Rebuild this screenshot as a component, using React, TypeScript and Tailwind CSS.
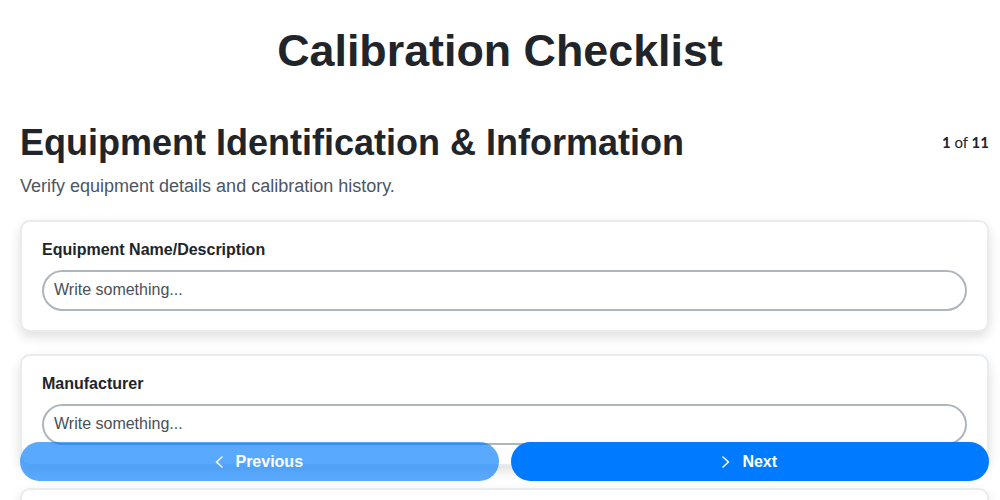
import React from "react";

const fields = ["Equipment Name/Description", "Manufacturer", "Model Number"];

const Chevron: React.FC<{ dir: "left" | "right" }> = ({ dir }) => (
  <svg width="8" height="12" viewBox="0 0 8 12" fill="none" stroke="currentColor" strokeWidth="1.6" strokeLinecap="round" strokeLinejoin="round">
    <path d={dir === "left" ? "M7 1 L1.5 6 L7 11" : "M1 1 L6.5 6 L1 11"} />
  </svg>
);

const Field: React.FC<{ label: string }> = ({ label }) => (
  <div className="mb-[22px] rounded-[10px] border-2 border-[#e9ecef] bg-white px-5 pt-[16px] pb-[19px] shadow-[0_5px_12px_rgba(0,0,0,0.13)]">
    <label className="mb-2 block text-base leading-6 font-bold text-[#212529]">
      {label}
    </label>
    <input
      type="text"
      placeholder="Write something..."
      className="block h-[41px] w-full rounded-full border-2 border-[#adb5bd] bg-white px-[10px] text-base text-[#212529] placeholder:text-[#495057] outline-none"
    />
  </div>
);

export default function App() {
  return (
    <div className="min-h-screen bg-white font-['Liberation_Sans',Arial,sans-serif] text-[#212529]">
      <h1 className="pt-6 text-center text-[44.8px] leading-[1.2] font-bold">
        Calibration Checklist
      </h1>

      <div className="pl-5 pr-[11px]">
        <div className="mt-[43px] flex items-start justify-between">
          <h2 className="text-4xl leading-[1.2] font-bold">
            Equipment Identification &amp; Information
          </h2>
          <div className="mt-[10px] font-['Lato',sans-serif] text-[15px] text-[#212529]">
            <span className="font-bold">1</span> of{" "}
            <span className="font-bold">11</span>
          </div>
        </div>
        <p className="mt-[9px] text-lg leading-[27px] text-[#4b5563]">
          Verify equipment details and calibration history.
        </p>

        <div className="mt-5">
          {fields.map((f) => (
            <Field key={f} label={f} />
          ))}
        </div>
      </div>

      <div className="fixed right-[11px] bottom-[19px] left-5 flex gap-3">
        <button className="flex h-[39px] flex-1 items-center justify-center gap-3 rounded-full bg-[#007bff] text-base font-bold text-white opacity-65">
          <Chevron dir="left" />
          Previous
        </button>
        <button className="flex h-[39px] flex-1 items-center justify-center gap-3 rounded-full bg-[#007bff] text-base font-bold text-white">
          <Chevron dir="right" />
          Next
        </button>
      </div>
    </div>
  );
}
